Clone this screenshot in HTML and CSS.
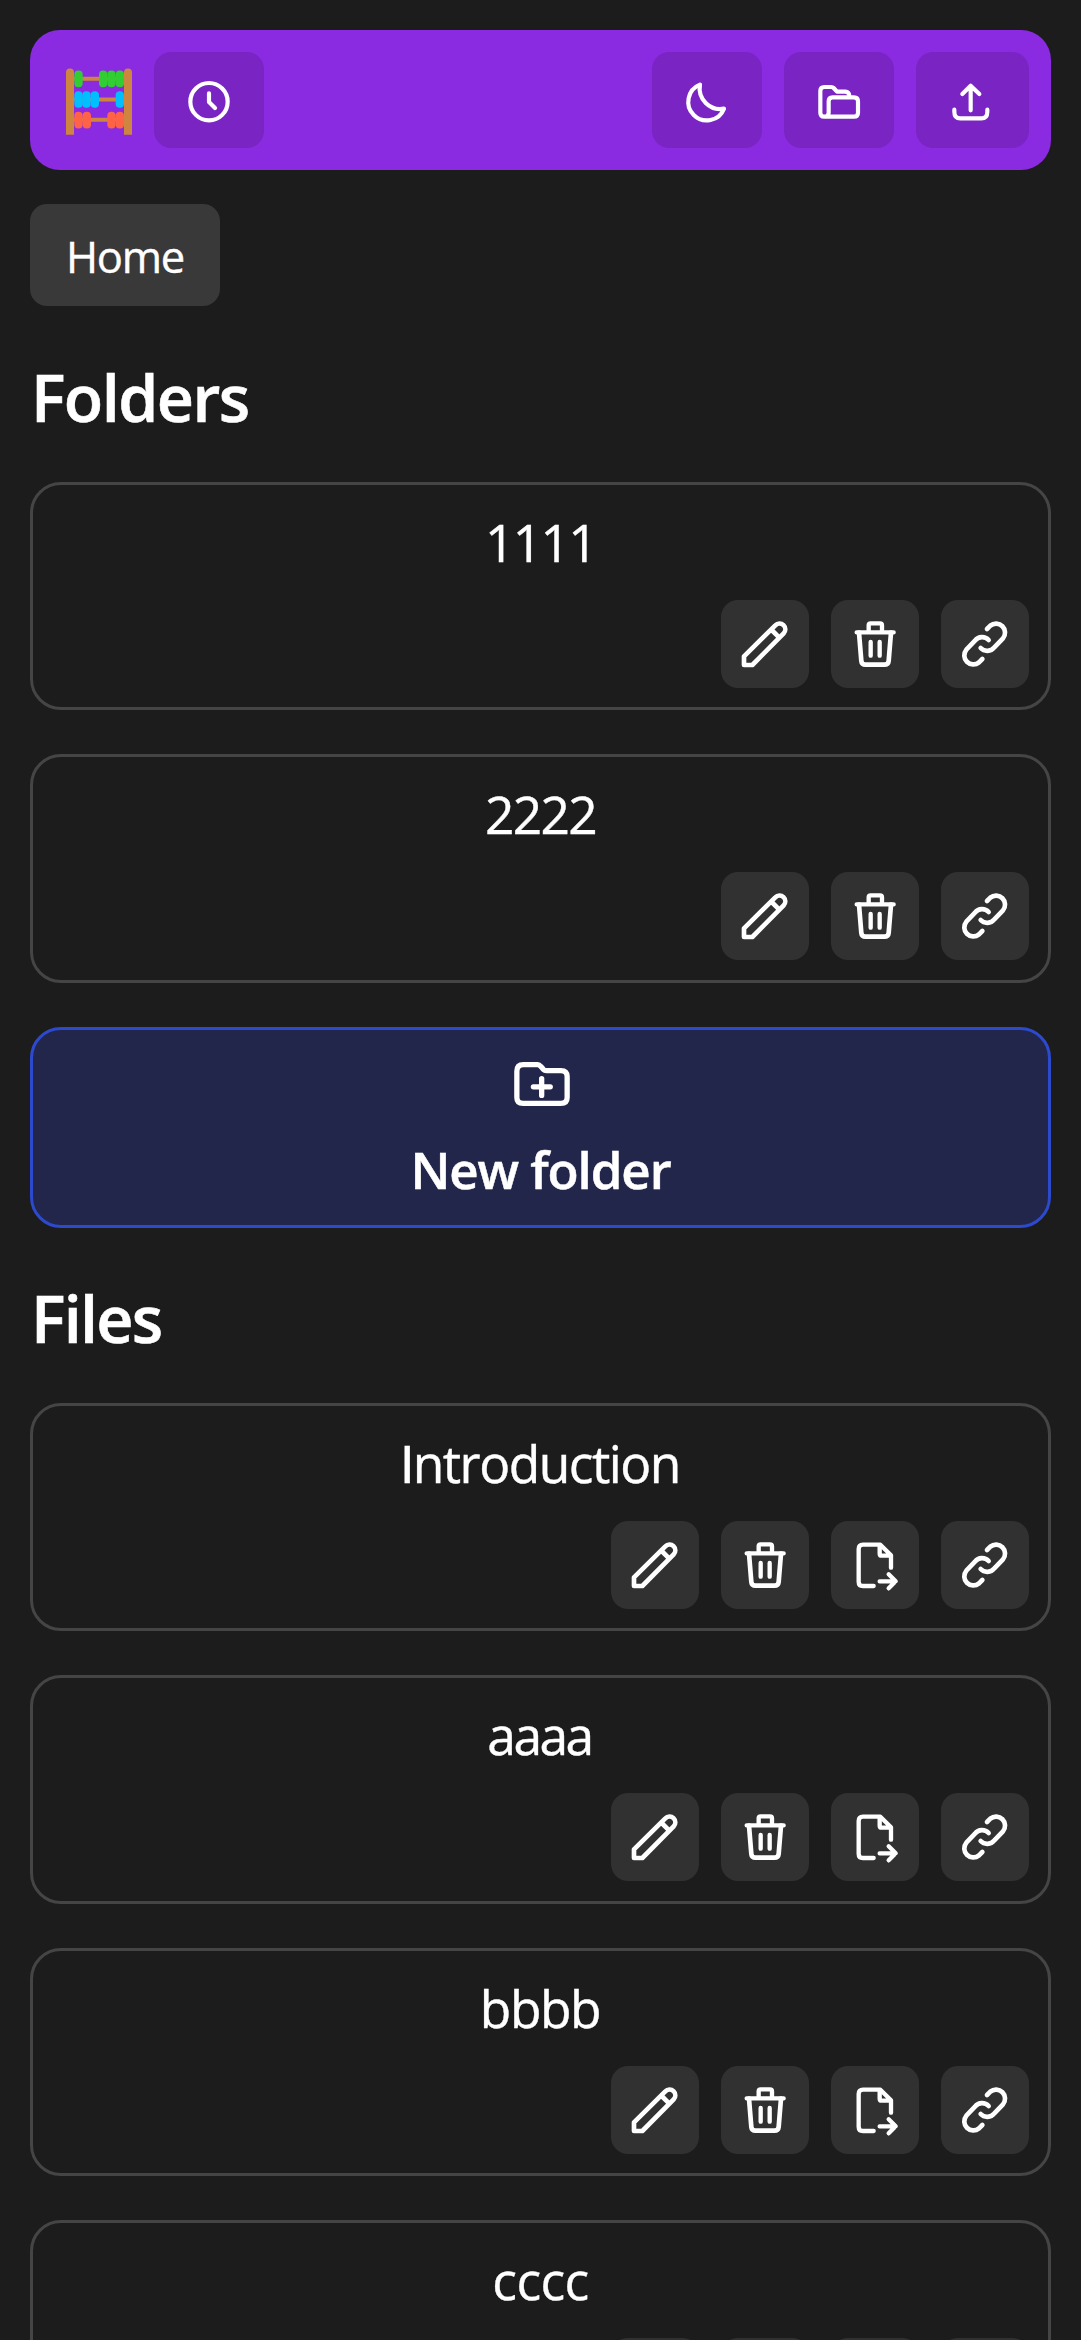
FILE: index.html
```html
<!DOCTYPE html>
<html lang="en">
<head>
<meta charset="utf-8">
<title>Home</title>
<link rel="stylesheet" href="styles.css">
</head>
<body>
<svg class="defs" width="0" height="0">
  <symbol id="pencil" viewBox="0 0 264 264"><path d="M69 195V169L163 76A16.5 16.5 0 0 1 188 100L94 195ZM152 90L175 113"/></symbol>
  <symbol id="trash" viewBox="0 0 264 264"><path d="M84 98L91 183Q92 194 104 194H160Q172 194 173 183L180 98"/><path d="M77 97H188M113 94V76Q113 70 119 70H147Q153 70 153 76V94M119 126V167M146 126V167" stroke-width="13"/></symbol>
  <symbol id="link" viewBox="0 0 264 264"><path d="M138 87L148 77A27 27 0 0 1 186 115L160 142A27 27 0 0 1 119 144M124 177L114 187A27 27 0 0 1 76 149L102 122A27 27 0 0 1 143 120"/></symbol>
  <symbol id="move" viewBox="0 0 264 264"><path d="M128 195H96Q83 195 83 182V84Q83 71 96 71H148L180 103V140M146 75V98Q146 104 152 104H178M146 181H193M173 160L194 181L173 202" stroke-width="13"/></symbol>
</svg>
<header class="topbar">
  <svg class="logo" viewBox="138 145 198 200">
    <path d="M160 177H314M160 239H314M160 300H314" stroke="#cd853f" stroke-width="12"/>
    <path d="M138 345V158a12 12 0 0 1 24 0V345ZM312 345V158a12 12 0 0 1 24 0V345Z" fill="#cd853f"/>
    <g fill="#32cd32"><rect x="163" y="152" width="25" height="50" rx="12"/><rect x="237" y="152" width="25" height="50" rx="12"/><rect x="262" y="152" width="25" height="50" rx="12"/><rect x="287" y="152" width="25" height="50" rx="12"/></g>
    <g fill="#00bfff"><rect x="163" y="214" width="25" height="50" rx="12"/><rect x="187" y="214" width="25" height="50" rx="12"/><rect x="212" y="214" width="25" height="50" rx="12"/><rect x="287" y="214" width="25" height="50" rx="12"/></g>
    <g fill="#ff6347"><rect x="163" y="276" width="25" height="50" rx="12"/><rect x="188" y="276" width="25" height="50" rx="12"/><rect x="262" y="276" width="25" height="50" rx="12"/><rect x="287" y="276" width="25" height="50" rx="12"/></g>
  </svg>
  <button class="bar-btn"><svg class="icon" viewBox="0 0 330 288"><circle cx="165" cy="149" r="56"/><path d="M165 124V150L183 168"/></svg></button>
  <span class="spacer"></span>
  <button class="bar-btn"><svg class="icon" viewBox="0 0 330 288"><path d="M144 98A55.5 55.5 0 1 0 216 170A62 62 0 0 1 144 98Z"/></svg></button>
  <button class="bar-btn"><svg class="icon" viewBox="0 0 330 288"><path d="M121 194Q109 194 109 182V117Q109 105 121 105H142Q146 105 149 108L159 119H184Q195 120 196 131M121 194Q134 194 134 182V148Q134 136 146 136H210Q222 136 222 148V182Q222 194 210 194Z"/></svg></button>
  <button class="bar-btn wide"><svg class="icon" viewBox="0 0 339 288"><path d="M164 102V175M139 126L164 101L190 126M115 173V179Q115 199 133 199H196Q214 199 214 179V173"/></svg></button>
</header>
<nav class="crumbs"><a class="crumb"><span class="home">Home</span></a></nav>
<main>
  <h1>Folders</h1>
  <section class="list">
    <article class="card"><h2 class="digits">1111</h2><div class="actions"><button><svg><use href="#pencil"/></svg></button><button><svg><use href="#trash"/></svg></button><button><svg><use href="#link"/></svg></button></div></article>
    <article class="card"><h2 class="digits">2222</h2><div class="actions"><button><svg><use href="#pencil"/></svg></button><button><svg><use href="#trash"/></svg></button><button><svg><use href="#link"/></svg></button></div></article>
    <button class="new-folder">
      <svg viewBox="402 155 168 133"><path d="M410 183Q410 163 430 163H473Q478 163 482 168L490 177Q494 181 499 181H543Q562 181 562 199V262Q562 280 543 280H429Q410 280 410 262ZM460 230H511M485 205V256"/></svg>
      <span>New folder</span>
    </button>
  </section>
  <h1 class="files">Files</h1>
  <section class="list">
    <article class="card"><h2 class="intro"><span class="initial">I</span>ntroduction</h2><div class="actions"><button><svg><use href="#pencil"/></svg></button><button><svg><use href="#trash"/></svg></button><button><svg><use href="#move"/></svg></button><button><svg><use href="#link"/></svg></button></div></article>
    <article class="card"><h2 class="a">aaaa</h2><div class="actions"><button><svg><use href="#pencil"/></svg></button><button><svg><use href="#trash"/></svg></button><button><svg><use href="#move"/></svg></button><button><svg><use href="#link"/></svg></button></div></article>
    <article class="card"><h2 class="b">bbbb</h2><div class="actions"><button><svg><use href="#pencil"/></svg></button><button><svg><use href="#trash"/></svg></button><button><svg><use href="#move"/></svg></button><button><svg><use href="#link"/></svg></button></div></article>
    <article class="card"><h2 class="c">cccc</h2><div class="actions"><button><svg><use href="#pencil"/></svg></button><button><svg><use href="#trash"/></svg></button><button><svg><use href="#move"/></svg></button><button><svg><use href="#link"/></svg></button></div></article>
  </section>
</main>
</body>
</html>
```
FILE: styles.css
```css
* { box-sizing: border-box; }
html { height: 100%; overflow: hidden; background: #1c1c1d; }
body {
  margin: 0;
  padding: 30px 30px 0;
  height: 100%;
  overflow: hidden;
  background: #1c1c1d;
  color: #fff;
  font-family: "Open Sans", "Noto Sans", sans-serif;
}
button { border: 0; padding: 0; margin: 0; color: inherit; font: inherit; }
svg { display: block; fill: none; }
.defs { display: none; }

.topbar {
  display: flex;
  align-items: center;
  gap: 22px;
  height: 140px;
  padding: 0 22.5px 0 36px;
  border-radius: 30px;
  background: #8a2be2;
}
.logo { width: 66px; height: 67px; margin-top: 2px; }
.spacer { flex: 1; }
.bar-btn { width: 110px; height: 96px; border-radius: 17px; background: #7a25c3; }
.bar-btn.wide { width: 113px; }
.icon { width: 100%; height: 100%; }
.icon path, .icon circle { stroke: #fff; stroke-width: 12.5; stroke-linecap: round; stroke-linejoin: round; }

.crumbs { display: flex; margin-top: 34px; }
.crumb {
  display: flex;
  justify-content: center;
  width: 190px;
  height: 102px;
  border-radius: 17px;
  background: #39393a;
  font-size: 43.5px;
  line-height: 106px;
}
.home { letter-spacing: -1.2px; -webkit-text-stroke: 0.4px #fff; }

h1 {
  margin: 0 0 0 1px;
  height: 176px;
  padding-top: 46.5px;
  font-size: 64.5px;
  line-height: 88px;
  font-weight: 600;
  letter-spacing: -1.5px;
  -webkit-text-stroke: 0.6px #fff;
}
h1.files { height: 175.5px; letter-spacing: -1.7px; }
.list { display: flex; flex-direction: column; gap: 44px; }
.card {
  display: flex;
  flex-direction: column;
  flex: none;
  height: 228.25px;
  padding: 20px 19.5px 0;
  border: 3px solid #454546;
  border-radius: 31px;
}
h2 {
  margin: 0 0 20.5px;
  height: 74.5px;
  font-size: 51.5px;
  line-height: 75px;
  font-weight: 400;
  text-align: center;
  -webkit-text-stroke: 0.4px #fff;
}
.digits { letter-spacing: -1.75px; text-indent: 0; }
.intro { letter-spacing: -1.5px; text-indent: -1px; }
.a { letter-spacing: -2.5px; text-indent: -2px; }
.b { letter-spacing: -1.4px; text-indent: -1px; }
.c { letter-spacing: -0.6px; }
.initial { font-family: Roboto, sans-serif; }
.actions { display: flex; justify-content: flex-end; gap: 22px; }
.actions button { width: 88px; height: 88px; border-radius: 17px; background: #313132; }
.actions svg { width: 88px; height: 88px; stroke: #fff; stroke-width: 14; stroke-linecap: round; stroke-linejoin: round; }

.new-folder {
  display: flex;
  flex-direction: column;
  align-items: center;
  height: 201px;
  padding-top: 32px;
  border: 3px solid #2d49ce;
  border-radius: 31px;
  background: #21264a;
  font-size: 51px;
  line-height: 74px;
  font-weight: 600;
  letter-spacing: -1.1px;
}
.new-folder span { -webkit-text-stroke: 0.5px #fff; }
.new-folder svg { width: 56px; height: 44px; margin: 0 0 26px 2px; stroke: #fff; stroke-width: 16; stroke-linecap: round; stroke-linejoin: round; }
```
